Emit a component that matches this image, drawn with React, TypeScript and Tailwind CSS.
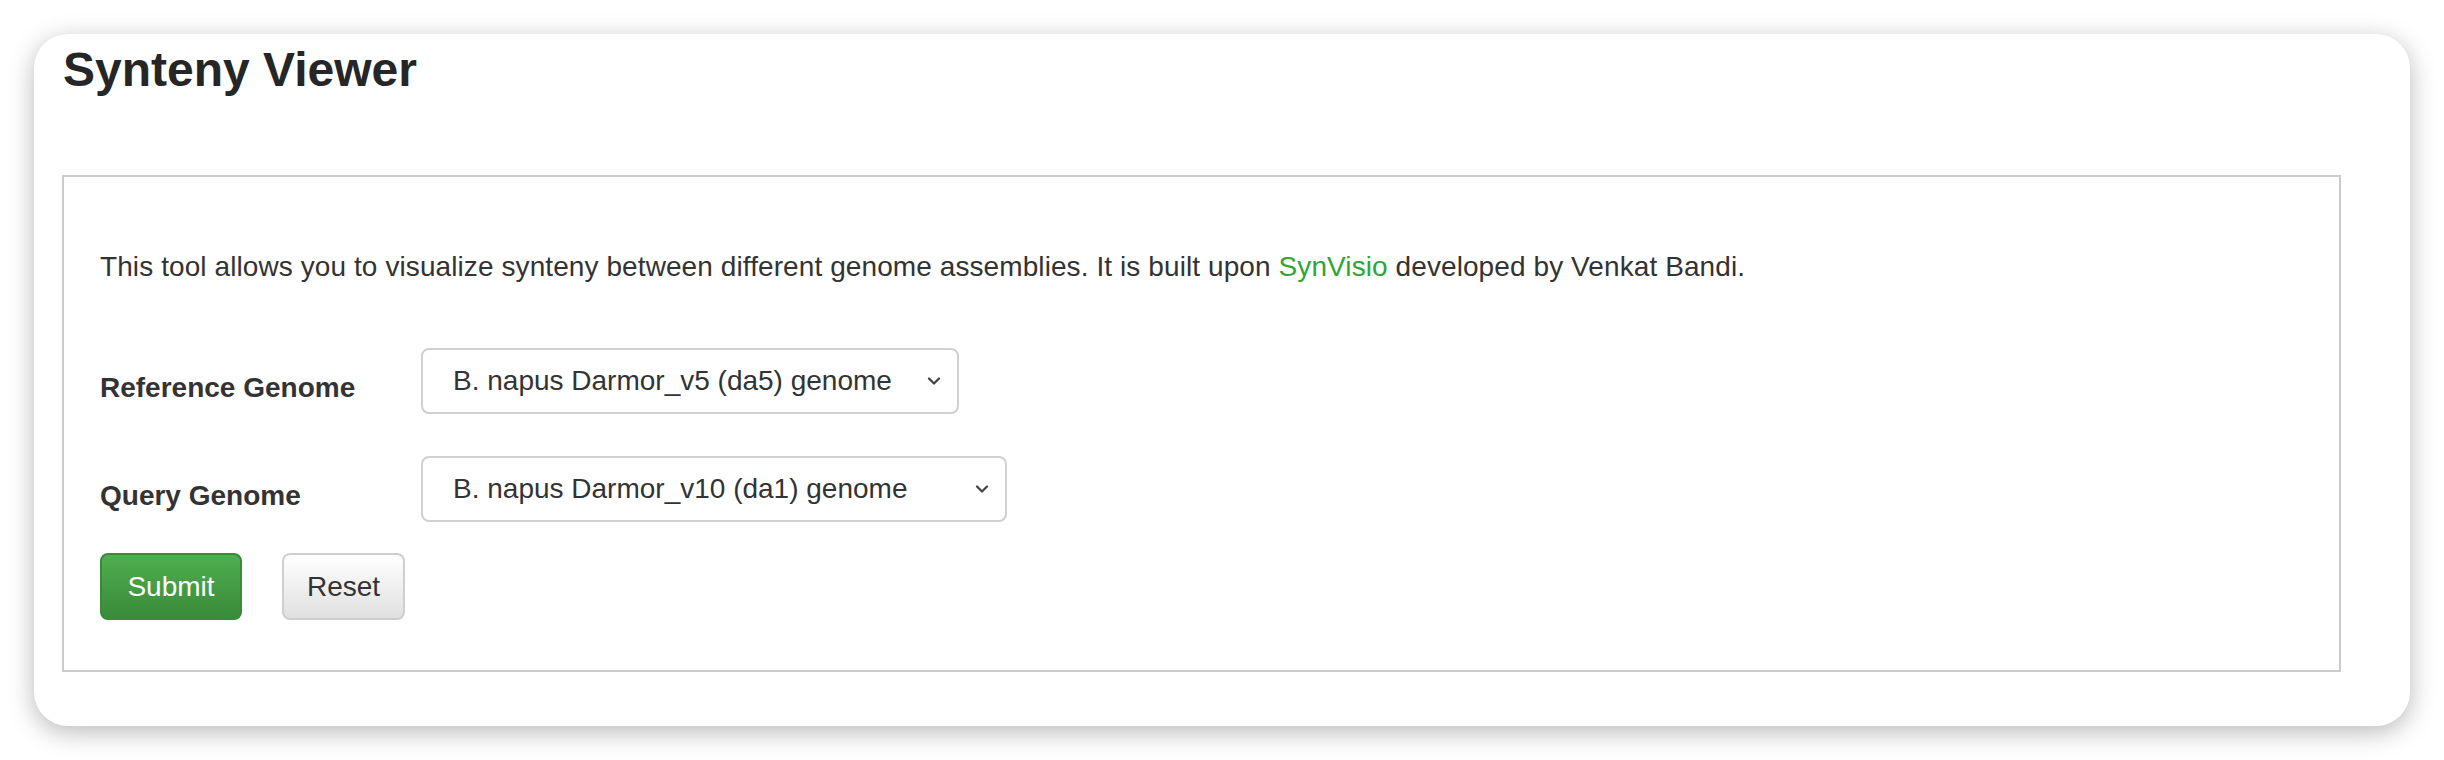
import { ChevronDown } from 'lucide-react';

const genomes = [
  'B. napus Darmor_v5 (da5) genome',
  'B. napus Darmor_v10 (da1) genome',
  'B. napus ZS11 genome',
];

function GenomeSelect({ value, width }: { value: string; width: string }) {
  return (
    <div className={`relative ${width}`}>
      <select
        defaultValue={value}
        className="w-full h-[66px] appearance-none rounded-[8px] border-2 border-[#d0d0d0] bg-white pl-[30px] pr-[60px] text-[28px] text-[#333] outline-none"
      >
        {genomes.map(g => (
          <option key={g}>{g}</option>
        ))}
      </select>
      <ChevronDown
        size={20}
        strokeWidth={2.75}
        className="pointer-events-none absolute right-[15px] top-1/2 -translate-y-1/2 text-[#444]"
      />
    </div>
  );
}

export default function App() {
  return (
    <div className="w-[2444px] h-[760px] bg-white p-[34px] font-['Liberation_Sans',Arial,sans-serif] text-[#333]">
      <div className="h-full rounded-[34px] bg-white shadow-[0_6px_26px_rgba(0,0,0,0.28)] pl-[28px] pr-[69px] pt-[9px]">
        <h3 className="pl-[1px] text-[48px] leading-[53px] font-bold text-[#262626]">Synteny Viewer</h3>

        {/* Form panel */}
        <div className="mt-[79px] h-[497px] border-2 border-[#cbcbcb] pl-[36px] pt-[70px]">
          <p className="text-[28px] leading-[40px] tracking-[0.09px]">
            This tool allows you to visualize synteny between different genome assemblies. It is built upon{' '}
            <a href="#" className="text-[#2fa536]">SynVisio</a> developed by Venkat Bandi.
          </p>

          <div className="mt-[61px] flex items-start">
            <label className="w-[321px] pt-[20px] text-[28px] leading-[40px] font-bold">Reference Genome</label>
            <GenomeSelect value={genomes[0]} width="w-[538px]" />
          </div>

          <div className="mt-[42px] flex items-start">
            <label className="w-[321px] pt-[20px] text-[28px] leading-[40px] font-bold">Query Genome</label>
            <GenomeSelect value={genomes[1]} width="w-[586px]" />
          </div>

          <div className="mt-[31px] flex gap-[40px]">
            <button className="h-[67px] w-[142px] rounded-[8px] border-2 border-[#3a8a3a] bg-gradient-to-b from-[#4fae4f] to-[#3a8b3a] text-[28px] text-white">
              Submit
            </button>
            <button className="h-[67px] w-[123px] rounded-[8px] border-2 border-[#cfcfcf] bg-gradient-to-b from-white to-[#e0e0e0] text-[28px] text-[#333]">
              Reset
            </button>
          </div>
        </div>
      </div>
    </div>
  );
}
